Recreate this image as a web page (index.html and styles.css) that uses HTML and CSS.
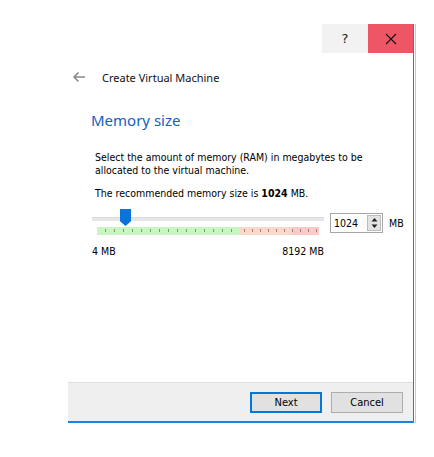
FILE: index.html
```html
<!DOCTYPE html>
<html>
<head>
<meta charset="utf-8">
<link rel="stylesheet" href="styles.css">
</head>
<body>
<div class="stage">
  <div class="window">
    <div class="titlebar">
      <div class="tb-btn help">?</div>
      <div class="tb-btn close">
        <svg width="12" height="12" viewBox="0 0 12 12"><path d="M1 1L11 11M11 1L1 11" stroke="#111" stroke-width="1.1" fill="none"/></svg>
      </div>
    </div>
    <div class="content">
      <div class="header">
        <svg class="back" width="14" height="12" viewBox="0 0 14 12"><path d="M13 6H2M6.5 1.5L2 6l4.5 4.5" stroke="#8a8a8a" stroke-width="1.6" fill="none"/></svg>
        <span class="htitle">Create Virtual Machine</span>
      </div>
      <h1 class="page-title">Memory size</h1>
      <div class="body">
        <p class="desc">Select the amount of memory (RAM) in megabytes to be<br>allocated to the virtual machine.</p>
        <p class="rec">The recommended memory size is <b>1024</b> MB.</p>
        <div class="slider-row">
          <div class="slider-col">
            <div class="track-wrap">
              <div class="track"></div>
              <div class="thumb"></div>
            </div>
            <div class="ticks">
              <div class="zone green"></div>
              <div class="zone orange"></div>
              <div class="zone red"></div>
            </div>
            <div class="limits"><span>4 MB</span><span>8192 MB</span></div>
          </div>
          <div class="spin">
            <span class="spin-val">1024</span>
            <div class="spin-btns">
              <svg width="9" height="14" viewBox="0 0 9 14"><path d="M4.5 2L7.5 5.5H1.5Z" fill="#222"/><path d="M4.5 12L7.5 8.5H1.5Z" fill="#222"/></svg>
            </div>
          </div>
          <span class="unit">MB</span>
        </div>
      </div>
    </div>
    <div class="footer">
      <button class="btn next">Next</button>
      <button class="btn">Cancel</button>
    </div>
  </div>
  <div class="behind"></div>
</div>
</body>
</html>
```

FILE: styles.css
```css
html, body {
  margin: 0;
  padding: 0;
  background: #fff;
  width: 434px;
  height: 457px;
  overflow: hidden;
}
.stage {
  display: flex;
  padding: 24px 0 0 68px;
}
.window {
  width: 345px;
  height: 399px;
  border-right: 1px solid #2b7bd0;
  display: flex;
  flex-direction: column;
  background: #fff;
}
.behind {
  width: 1px;
  height: 399px;
  margin-left: 1px;
  background: #c9c9c9;
}
.titlebar {
  height: 29px;
  display: flex;
  justify-content: flex-end;
}
.tb-btn {
  width: 46px;
  height: 29px;
  display: flex;
  align-items: center;
  justify-content: center;
}
.help {
  background: #f2f2f2;
  font-family: "DejaVu Sans", sans-serif;
  font-size: 13px;
  color: #222;
}
.close {
  width: 45px;
  background: #ef5665;
}
.content {
  flex: 1;
  display: flex;
  flex-direction: column;
}
.header {
  display: flex;
  align-items: center;
  height: 14px;
  margin-top: 17px;
  padding-left: 4px;
}
.back {
  margin-right: 16px;
}
.htitle {
  font-family: "Noto Sans", sans-serif;
  font-size: 11px;
  color: #111;
}
.page-title {
  margin: 26px 0 0 23px;
  font-family: "Noto Sans", sans-serif;
  font-weight: normal;
  font-size: 15px;
  line-height: 20px;
  color: #1460c4;
}
.body {
  padding-left: 27px;
  font-family: "DejaVu Sans Condensed", "DejaVu Sans", sans-serif;
  font-stretch: condensed;
  font-size: 10.5px;
  color: #000;
}
.desc {
  margin: 21px 0 0 0;
  white-space: nowrap;
  line-height: 13px;
}
.rec {
  margin: 10px 0 0 0;
  line-height: 13px;
}
.rec b {
  font-weight: bold;
}
.slider-row {
  display: flex;
  align-items: flex-start;
  margin-top: 9px;
  margin-left: -3px;
}
.slider-col {
  width: 232px;
  display: flex;
  flex-direction: column;
}
.track-wrap {
  position: relative;
  height: 18px;
}
.track {
  position: absolute;
  left: 0;
  right: 0;
  top: 8px;
  height: 4px;
  background: #e6e6e6;
  border-top: 1px solid #dcdcdc;
  box-sizing: border-box;
}
.thumb {
  position: absolute;
  left: 28px;
  top: 0;
  width: 11px;
  height: 17px;
  background: #0a74da;
  clip-path: polygon(0 0, 100% 0, 100% 72%, 50% 100%, 0 72%);
}
.ticks {
  display: flex;
  margin: 0 5px 0 5px;
  height: 8px;
}
.zone {
  height: 8px;
  background-repeat: repeat-x;
}
.green {
  width: 143px;
  background-color: #c9f5c2;
  background-image: repeating-linear-gradient(90deg, transparent 0 8px, #7b9a77 8px 9px);
  background-size: 100% 3px;
  background-position: 0 2px;
}
.orange {
  width: 52px;
  background-color: #fbd7c9;
  background-image: repeating-linear-gradient(90deg, transparent 0 4px, #9c8880 4px 5px, transparent 5px 8px);
  background-size: 100% 3px;
  background-position: 0 2px;
}
.red {
  width: 27px;
  background-color: #fcc8c8;
  background-image: repeating-linear-gradient(90deg, #a08080 0 1px, transparent 1px 8px);
  background-size: 100% 3px;
  background-position: 0 2px;
}
.limits {
  display: flex;
  justify-content: space-between;
  margin-top: 10px;
  line-height: 13px;
}
.spin {
  margin-left: 6px;
  margin-top: 4px;
  width: 53px;
  height: 20px;
  box-sizing: border-box;
  border: 1px solid #a6a6a6;
  display: flex;
  align-items: center;
  background: #fff;
}
.spin-val {
  flex: 1;
  padding-left: 3px;
}
.spin-btns {
  width: 14px;
  height: 16px;
  margin-right: 1px;
  background: #e3e3e3;
  border: 1px solid #bcbcbc;
  box-sizing: border-box;
  display: flex;
  align-items: center;
  justify-content: center;
}
.unit {
  margin-left: 6px;
  margin-top: 8px;
}
.footer {
  height: 38px;
  background: #efefef;
  border-top: 1px solid #dfdfdf;
  border-bottom: 2px solid #1a82e0;
  display: flex;
  align-items: center;
  justify-content: flex-end;
  padding-right: 10px;
  gap: 9px;
}
.btn {
  width: 72px;
  height: 21px;
  box-sizing: border-box;
  border: 1px solid #adadad;
  background: #e1e1e1;
  font-family: "DejaVu Sans Condensed", "DejaVu Sans", sans-serif;
  font-stretch: condensed;
  font-size: 11px;
  color: #000;
  padding: 0;
  margin: 0;
}
.btn.next {
  border: 2px solid #0078d7;
}
```
